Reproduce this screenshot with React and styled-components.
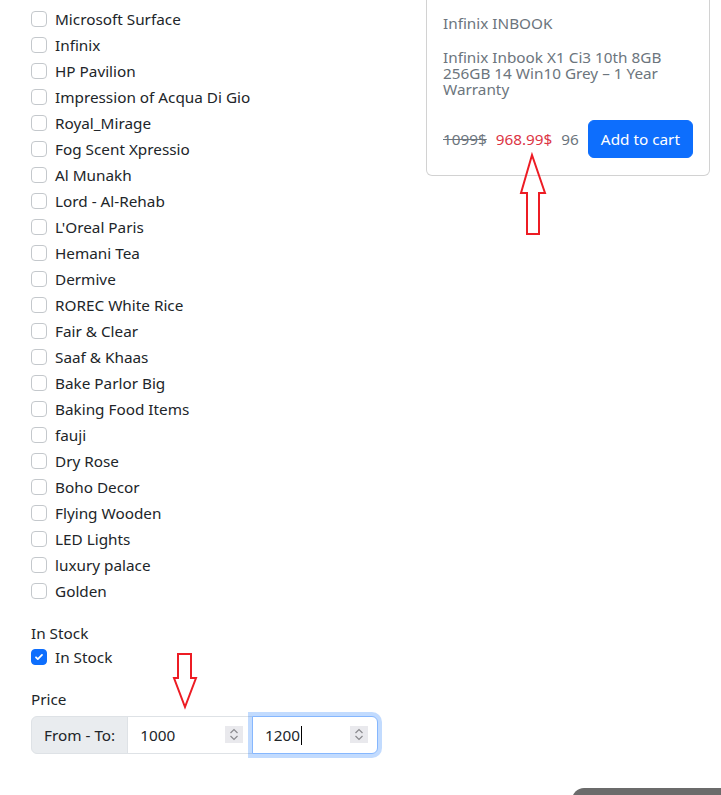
import React from "react";
import styled, { createGlobalStyle } from "styled-components";

const Global = createGlobalStyle`
  html, body { margin: 0; padding: 0; background: #fff; }
  body {
    font-family: "Noto Sans", "Open Sans", sans-serif;
    font-size: 15.3px;
    line-height: 24px;
    color: #212529;
    overflow: hidden;
    height: 795px;
  }
  * { box-sizing: border-box; }
`;

const Page = styled.div`
  position: relative;
  display: flex;
  align-items: flex-start;
  width: 721px;
  height: 795px;
  overflow: hidden;
`;

const Sidebar = styled.aside`
  width: 426px;
  flex: none;
  padding: 7px 0 0 31px;
  display: flex;
  flex-direction: column;
`;

const Main = styled.main`
  width: 284px;
  flex: none;
  display: flex;
  flex-direction: column;
`;

const CheckRow = styled.label`
  display: flex;
  align-items: center;
  gap: 8px;
  min-height: 24px;
  margin-bottom: 2px;
  cursor: pointer;
`;

const Box = styled.span`
  flex: none;
  width: 16px;
  height: 16px;
  border-radius: 4px;
  border: 1px solid ${(p) => (p.$checked ? "#0d6efd" : "#c4c8cc")};
  background: ${(p) => (p.$checked ? "#0d6efd" : "#fff")};
  display: flex;
  align-items: center;
  justify-content: center;
`;

const GroupTitle = styled.div`
  margin-top: 16px;
  line-height: 24px;
`;

const PriceTitle = styled.div`
  margin-top: 16px;
  line-height: 24px;
  margin-bottom: 5px;
`;

const InputGroup = styled.div`
  display: flex;
  width: 347px;
  height: 38px;
`;

const Addon = styled.div`
  display: flex;
  align-items: center;
  padding: 0 12px;
  background: #e9ecef;
  border: 1px solid #dee2e6;
  border-radius: 6px 0 0 6px;
  white-space: nowrap;
`;

const NumField = styled.div`
  position: relative;
  flex: 1;
  display: flex;
  align-items: center;
  padding: 0 12px;
  border: 1px solid ${(p) => (p.$focus ? "#86b7fe" : "#dee2e6")};
  margin-left: -1px;
  border-radius: ${(p) => (p.$last ? "0 6px 6px 0" : "0")};
  box-shadow: ${(p) => (p.$focus ? "0 0 0 4px rgba(13,110,253,.25)" : "none")};
  z-index: ${(p) => (p.$focus ? 2 : 1)};
  background: #fff;
`;

const Value = styled.span`
  display: flex;
  align-items: center;
`;

const Caret = styled.span`
  display: inline-block;
  width: 1px;
  height: 19px;
  background: #000;
  margin-left: 1px;
`;

const Spinner = styled.span`
  position: absolute;
  right: 9px;
  top: 9px;
  width: 18px;
  height: 17px;
  background: #e9e9ed;
  display: flex;
  align-items: center;
  justify-content: center;
`;

const Card = styled.div`
  border: 1px solid rgba(0, 0, 0, 0.175);
  border-top: none;
  border-radius: 0 0 6px 6px;
  padding: 11px 16px 17px;
  color: #6c757d;
  display: flex;
  flex-direction: column;
`;

const CardTitle = styled.div`
  line-height: 24px;
`;

const CardText = styled.div`
  margin-top: 14px;
  line-height: 16px;
`;

const PriceRow = styled.div`
  margin-top: 23px;
  display: flex;
  align-items: center;
  gap: 9px;
  white-space: nowrap;
`;

const OldPrice = styled.span`
  text-decoration: line-through;
`;

const NewPrice = styled.span`
  color: #dc3545;
`;

const Button = styled.button`
  font: inherit;
  color: #fff;
  background: #0d6efd;
  border: 1px solid #0d6efd;
  border-radius: 6px;
  padding: 6px 12px;
  line-height: 24px;
  white-space: nowrap;
`;

const Arrow = styled.svg`
  position: absolute;
  overflow: visible;
`;

const BottomTab = styled.div`
  position: absolute;
  left: 572px;
  top: 788px;
  width: 160px;
  height: 20px;
  background: #6b6b6b;
  border-radius: 12px 0 0 0;
`;

const brands = [
  "Microsoft Surface",
  "Infinix",
  "HP Pavilion",
  "Impression of Acqua Di Gio",
  "Royal_Mirage",
  "Fog Scent Xpressio",
  "Al Munakh",
  "Lord - Al-Rehab",
  "L'Oreal Paris",
  "Hemani Tea",
  "Dermive",
  "ROREC White Rice",
  "Fair & Clear",
  "Saaf & Khaas",
  "Bake Parlor Big",
  "Baking Food Items",
  "fauji",
  "Dry Rose",
  "Boho Decor",
  "Flying Wooden",
  "LED Lights",
  "luxury palace",
  "Golden",
];

const Check = ({ checked, children }) => (
  <CheckRow>
    <Box $checked={checked}>
      {checked && (
        <svg width="12" height="12" viewBox="0 0 20 20">
          <path d="M5 10.5l3 3 7-7" fill="none" stroke="#fff" strokeWidth="3" strokeLinecap="round" strokeLinejoin="round" />
        </svg>
      )}
    </Box>
    <span>{children}</span>
  </CheckRow>
);

const SpinIcon = () => (
  <Spinner>
    <svg width="10" height="13" viewBox="0 0 10 13">
      <path d="M1.5 5l3.5-3.5L8.5 5M1.5 8l3.5 3.5L8.5 8" fill="none" stroke="#8a8a8e" strokeWidth="1.2" />
    </svg>
  </Spinner>
);

export default function App() {
  return (
    <>
      <Global />
      <Page>
        <Sidebar>
          {brands.map((b) => (
            <Check key={b}>{b}</Check>
          ))}
          <GroupTitle>In Stock</GroupTitle>
          <Check checked>In Stock</Check>
          <PriceTitle>Price</PriceTitle>
          <InputGroup>
            <Addon>From - To:</Addon>
            <NumField>
              <Value>1000</Value>
              <SpinIcon />
            </NumField>
            <NumField $focus $last>
              <Value>
                1200
                <Caret />
              </Value>
              <SpinIcon />
            </NumField>
          </InputGroup>
        </Sidebar>
        <Main>
          <Card>
            <CardTitle>Infinix INBOOK</CardTitle>
            <CardText>
              Infinix Inbook X1 Ci3 10th 8GB 256GB 14 Win10 Grey – 1 Year Warranty
            </CardText>
            <PriceRow>
              <OldPrice>1099$</OldPrice>
              <NewPrice>968.99$</NewPrice>
              <span>96</span>
              <Button>Add to cart</Button>
            </PriceRow>
          </Card>
        </Main>
        <Arrow style={{ left: 519, top: 154 }} width="26" height="82" viewBox="0 0 26 82">
          <path d="M13 1L2 39h6v41h12V39h6z" fill="none" stroke="#ed1c24" strokeWidth="2" />
        </Arrow>
        <Arrow style={{ left: 173, top: 653 }} width="24" height="55" viewBox="0 0 24 55">
          <path d="M5 1h13v24h5L12 54 1 25h4z" fill="none" stroke="#ed1c24" strokeWidth="2" />
        </Arrow>
        <BottomTab />
      </Page>
    </>
  );
}
